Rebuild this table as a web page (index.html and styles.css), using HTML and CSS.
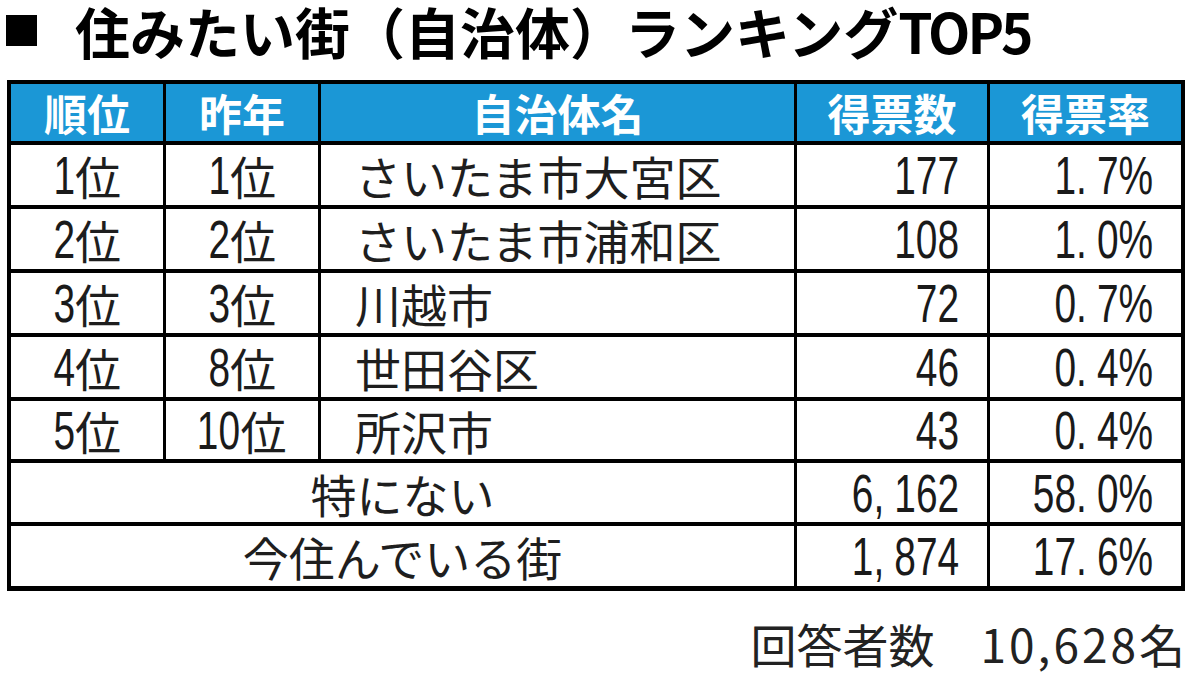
FILE: index.html
```html
<!DOCTYPE html>
<html lang="ja">
<head>
<meta charset="utf-8">
<title>住みたい街（自治体）ランキングTOP5</title>
<link rel="stylesheet" href="styles.css">
</head>
<body>
<div class="page">
  <h1 class="title"><span class="sq"></span><span class="ttext">住みたい街（自治体）ランキング<span class="tl">TOP5</span></span></h1>
  <div class="tbl">
    <div class="c h">順位</div>
    <div class="c h">昨年</div>
    <div class="c h">自治体名</div>
    <div class="c h">得票数</div>
    <div class="c h">得票率</div>

    <div class="c ctr"><span class="d">1</span>位</div>
    <div class="c ctr"><span class="d">1</span>位</div>
    <div class="c name">さいたま市大宮区</div>
    <div class="c num"><span class="d">177</span></div>
    <div class="c num"><span class="d">1<span class="p">.</span>7%</span></div>

    <div class="c ctr"><span class="d">2</span>位</div>
    <div class="c ctr"><span class="d">2</span>位</div>
    <div class="c name">さいたま市浦和区</div>
    <div class="c num"><span class="d">108</span></div>
    <div class="c num"><span class="d">1<span class="p">.</span>0%</span></div>

    <div class="c ctr"><span class="d">3</span>位</div>
    <div class="c ctr"><span class="d">3</span>位</div>
    <div class="c name">川越市</div>
    <div class="c num"><span class="d">72</span></div>
    <div class="c num"><span class="d">0<span class="p">.</span>7%</span></div>

    <div class="c ctr"><span class="d">4</span>位</div>
    <div class="c ctr"><span class="d">8</span>位</div>
    <div class="c name">世田谷区</div>
    <div class="c num"><span class="d">46</span></div>
    <div class="c num"><span class="d">0<span class="p">.</span>4%</span></div>

    <div class="c ctr"><span class="d">5</span>位</div>
    <div class="c ctr"><span class="d two">10</span>位</div>
    <div class="c name">所沢市</div>
    <div class="c num"><span class="d">43</span></div>
    <div class="c num"><span class="d">0<span class="p">.</span>4%</span></div>

    <div class="c ctr span3">特にない</div>
    <div class="c num"><span class="d">6<span class="p">,</span>162</span></div>
    <div class="c num"><span class="d">58<span class="p">.</span>0%</span></div>

    <div class="c ctr span3">今住んでいる街</div>
    <div class="c num"><span class="d">1<span class="p">,</span>874</span></div>
    <div class="c num"><span class="d">17<span class="p">.</span>6%</span></div>
  </div>
  <p class="foot">回答者数　<span class="fn">10,628</span>名</p>
</div>
</body>
</html>
```

FILE: styles.css
```css
html, body {
  margin: 0;
  padding: 0;
  background: #ffffff;
}

.page {
  width: 1200px;
  height: 679px;
  overflow: hidden;
  font-family: "Noto Sans CJK JP", "Noto Sans", sans-serif;
  color: #1e1e1e;
}

.title {
  margin: 0;
  height: 60px;
  display: flex;
  align-items: center;
  font-size: 55px;
  line-height: 60px;
  font-weight: 700;
  color: #000;
}

.sq {
  display: inline-block;
  width: 31px;
  height: 31px;
  background: #000;
  margin-left: 6px;
  margin-right: 38px;
  flex: none;
}

.tl {
  letter-spacing: -3px;
}

.tbl {
  margin: 20px 0 0 7px;
  width: 1170px;
  display: grid;
  grid-template-columns: 152px 152px 473px 190px 191px;
  grid-template-rows: 57px 60px 60px 60px 60px 58px 59px 60px;
  column-gap: 3px;
  row-gap: 4px;
  background: #000;
  border: 4px solid #000;
  border-bottom-width: 5px;
}

.c {
  background: #fff;
  display: flex;
  align-items: center;
  font-size: 46px;
  line-height: 1;
}

.h {
  background: #1b97d6;
  color: #fff;
  font-weight: 700;
  font-size: 43px;
  justify-content: center;
}

.ctr {
  justify-content: center;
}

.name {
  padding-left: 34px;
}

.num {
  justify-content: flex-end;
  padding-right: 28px;
}

.span3 {
  grid-column: 1 / 4;
}

.d {
  display: inline-block;
  font-family: "Liberation Sans", Arial, sans-serif;
  font-size: 54px;
  line-height: 1;
  transform: scaleX(0.72);
  transform-origin: right center;
  color: #1a1a1a;
}

.p {
  margin-right: 14px;
}

.ctr .d {
  margin-left: -8px;
}

.ctr .d.two {
  margin-left: -17px;
}

.foot {
  margin: 22px 15px 0 0;
  text-align: right;
  font-size: 46px;
  line-height: 60px;
  color: #222;
}

.fn {
  letter-spacing: 3px;
}
```
